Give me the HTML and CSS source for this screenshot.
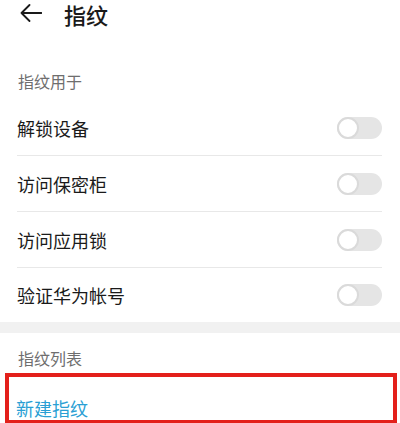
FILE: index.html
```html
<!DOCTYPE html>
<html lang="zh-CN">
<head>
<meta charset="utf-8">
<title>指纹</title>
<link rel="stylesheet" href="styles.css">
</head>
<body>
<header class="header">
  <svg class="back" width="22" height="18" viewBox="0 0 22 18" aria-hidden="true">
    <path d="M21.5 9H1.5M9.5 1L1.5 9L9.5 17" fill="none" stroke="#1a1a1a" stroke-width="1.8" stroke-linecap="round" stroke-linejoin="round"/>
  </svg>
  <h1 class="title">指纹</h1>
</header>

<div class="section-label first">指纹用于</div>
<ul class="list">
  <li class="row"><span>解锁设备</span><span class="toggle"></span></li>
  <li class="row"><span>访问保密柜</span><span class="toggle"></span></li>
  <li class="row"><span>访问应用锁</span><span class="toggle"></span></li>
  <li class="row last"><span>验证华为帐号</span><span class="toggle"></span></li>
</ul>

<div class="band"></div>

<div class="section-label second">指纹列表</div>
<div class="highlight">
  <div class="new-row">新建指纹</div>
</div>
</body>
</html>
```

FILE: styles.css
```css
html, body {
  margin: 0;
  padding: 0;
  background: #ffffff;
  overflow: hidden;
}
body {
  font-family: "Noto Sans CJK SC", "Noto Sans", sans-serif;
  color: #1a1a1a;
  width: 400px;
  height: 423px;
}
.header {
  display: flex;
  align-items: center;
  height: 28px;
  padding-left: 20px;
  gap: 22px;
}
.back {
  display: block;
  margin-top: -2px;
}
.title {
  margin: 0;
  font-size: 22px;
  font-weight: 500;
  line-height: 26px;
}
.section-label {
  font-size: 16px;
  color: #6e6e6e;
  padding-left: 18px;
  display: flex;
  line-height: 20px;
}
.section-label.first {
  height: 72px;
  align-items: flex-end;
  padding-bottom: 9px;
  box-sizing: border-box;
}
.section-label.second {
  height: 40px;
  align-items: flex-end;
  padding-bottom: 5px;
  box-sizing: border-box;
}
.list {
  list-style: none;
  margin: 0 18px 0 17px;
  padding: 0;
}
.row {
  display: flex;
  align-items: center;
  justify-content: space-between;
  height: 56px;
  border-bottom: 1px solid #e8e8e8;
  font-size: 18px;
  box-sizing: border-box;
}
.row.last {
  border-bottom: none;
  height: 54px;
}
.toggle {
  position: relative;
  width: 45px;
  height: 22px;
  border-radius: 11px;
  background: #e5e5e5;
  flex: none;
}
.toggle::after {
  content: "";
  position: absolute;
  left: 0;
  top: 0;
  width: 22px;
  height: 22px;
  box-sizing: border-box;
  border-radius: 50%;
  background: #ffffff;
  border: 2px solid #dadada;
}
.band {
  height: 11px;
  background: #f1f1f1;
}
.highlight {
  margin: 0 3px 0 5px;
  border: 4px solid #e3201b;
  height: 43px;
}
.new-row {
  padding: 21px 0 0 7px;
  font-size: 18px;
  line-height: 20px;
  color: #2a9fd4;
}
```
